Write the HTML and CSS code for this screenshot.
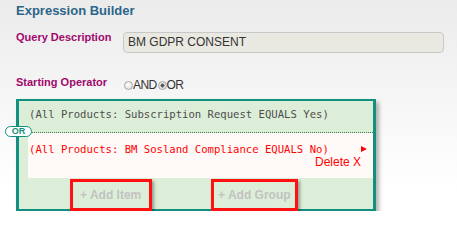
FILE: index.html
```html
<!DOCTYPE html>
<html lang="en">
<head>
    <meta charset="UTF-8">
    <title>Expression Builder</title>
    <link rel="stylesheet" href="styles.css">
</head>
<body>
<h2 class="title">Expression Builder</h2>

<div class="field">
    <label class="lbl">Query Description</label>
    <div class="input">BM GDPR CONSENT</div>
</div>

<div class="field op">
    <label class="lbl">Starting Operator</label>
    <div class="radios">
        <span class="radio"></span><span class="rtxt">AND</span>
        <span class="radio on"></span><span class="rtxt">OR</span>
    </div>
</div>

<div class="group">
    <div class="cond">(All Products: Subscription Request EQUALS Yes)</div>
    <span class="badge">OR</span>
    <div class="cond err">
        <div class="line">
            <span>(All Products: BM Sosland Compliance EQUALS No)</span>
            <span class="flag"></span>
        </div>
        <div class="del">Delete X</div>
    </div>
    <div class="actions">
        <span class="add item">+ Add Item</span>
        <span class="add grp">+ Add Group</span>
    </div>
</div>
</body>
</html>
```

FILE: styles.css
```css
* {
    margin: 0;
    padding: 0;
    box-sizing: border-box;
}

html {
    min-height: 100%;
    background: linear-gradient(#ebebeb 0, #f7f7f7 110px, #fff 190px);
}

body {
    padding-left: 16px;
    font-family: "Liberation Sans", Arial, sans-serif;
    color: #333;
}

.title {
    padding-top: 3px;
    font-size: 13px;
    line-height: 15px;
    font-weight: bold;
    color: #2b668a;
}

.field {
    display: flex;
    align-items: flex-start;
    margin-top: 14px;
}

.lbl {
    width: 107px;
    margin-top: -1px;
    font-size: 11px;
    line-height: 13px;
    font-weight: bold;
    color: #a0086c;
}

.input {
    width: 321px;
    height: 21px;
    padding-left: 4px;
    border: 1px solid #c8c8c8;
    border-radius: 4px;
    background: #eae9e1;
    font-size: 12px;
    line-height: 18px;
    color: #333;
}

.op {
    height: 16px;
    margin-top: 23px;
}

.op .lbl {
    margin-top: 0;
}

.radios {
    display: flex;
    align-items: center;
    margin: 2px 0 0 1px;
    font-size: 12px;
    line-height: 14px;
    color: #333;
}

.rtxt {
    letter-spacing: -0.6px;
}

.radio {
    width: 9px;
    height: 9px;
    border: 1px solid #a4a4a4;
    border-radius: 50%;
    background: radial-gradient(circle at 40% 35%, #fff 0, #e4e4e4 70%);
}

.radio.on {
    margin-left: 1px;
    background: radial-gradient(circle, #555 0, #666 1.8px, #e8e8e8 2.3px);
}

.group {
    position: relative;
    width: 360px;
    margin-top: 7px;
    border: 3px solid #12907f;
    border-top-width: 2px;
    border-bottom-width: 2px;
    background: #ddeed8;
    box-shadow: 3px 3px 4px rgba(0, 0, 0, 0.3);
}

.cond {
    height: 32px;
    padding: 6px 0 0 10px;
    border-bottom: 1px dotted #3c7a38;
    font-family: "DejaVu Sans Mono", Consolas, monospace;
    font-size: 10.6px;
    line-height: 14px;
    color: #4d4d4d;
}

.badge {
    position: absolute;
    left: -14px;
    top: 25px;
    width: 27px;
    height: 11px;
    border: 1px solid #12907f;
    border-radius: 6px;
    background: #fff;
    text-align: center;
    font-size: 9px;
    line-height: 9px;
    font-weight: bold;
    color: #12907f;
}

.cond.err {
    height: 45px;
    margin-left: 9px;
    padding: 9px 12px 0 1px;
    border-bottom: 0;
    background: #fffaf8;
    color: #f00;
}

.line {
    display: flex;
    justify-content: space-between;
    align-items: flex-start;
}

.flag {
    width: 0;
    height: 0;
    margin: 4px -6px 0 0;
    border-left: 6px solid #f00;
    border-top: 3px solid transparent;
    border-bottom: 3px solid transparent;
}

.del {
    text-align: right;
    font-family: "Liberation Sans", Arial, sans-serif;
    font-size: 12px;
    line-height: 12px;
}

.actions {
    display: flex;
    gap: 59px;
    padding: 1px 0 0 51px;
}

.add {
    height: 32px;
    margin-bottom: -2px;
    border: 3px solid #f11;
    font-size: 12px;
    line-height: 26px;
    font-weight: bold;
    color: #c2c2c2;
    box-shadow: 2px 2px 3px rgba(0, 0, 0, 0.35);
}

.item {
    width: 82px;
    padding-left: 7px;
}

.grp {
    width: 87px;
    padding-left: 4px;
}
```
